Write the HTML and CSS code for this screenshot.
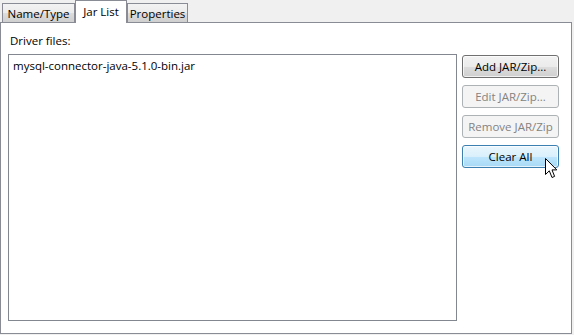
FILE: index.html
```html
<!DOCTYPE html>
<html>
<head>
<meta charset="utf-8">
<link rel="stylesheet" href="styles.css">
</head>
<body>
<div class="dialog">
  <div class="tabs">
    <div class="tab tab-name">Name/Type</div>
    <div class="tab tab-selected">Jar List</div>
    <div class="tab tab-props">Properties</div>
  </div>
  <div class="panel">
    <div class="label">Driver files:</div>
    <div class="body">
      <div class="list">
        <div class="item">mysql-connector-java-5.1.0-bin.jar</div>
      </div>
      <div class="buttons">
        <div class="btn">Add JAR/Zip...</div>
        <div class="btn btn-disabled">Edit JAR/Zip...</div>
        <div class="btn btn-disabled">Remove JAR/Zip</div>
        <div class="btn btn-hover">Clear All</div>
      </div>
    </div>
  </div>
  <svg class="cursor" width="14" height="22" viewBox="0 0 14 22">
    <path d="M0.5 0.5 L0.5 16.5 L4.3 12.8 L7 19.5 L9.6 18.4 L7 11.9 L11.8 11.9 Z" fill="#fff" stroke="#000" stroke-width="1" stroke-linejoin="miter"/>
  </svg>
</div>
</body>
</html>
```

FILE: styles.css
```css
html, body {
  margin: 0;
  padding: 0;
  background: #f0f0f0;
}
body {
  width: 574px;
  height: 335px;
  overflow: hidden;
  font-family: "Open Sans", "Noto Sans", sans-serif;
  font-size: 11.5px;
  color: #000;
}
.dialog {
  position: relative;
  width: 574px;
  height: 335px;
}
.tabs {
  display: flex;
  align-items: flex-end;
  height: 22px;
  padding-left: 2px;
  position: relative;
  z-index: 2;
}
.tab {
  box-sizing: border-box;
  height: 19px;
  border: 1px solid #898c95;
  border-bottom: none;
  background: linear-gradient(#f3f3f3, #ebebeb 50%, #dddddd 51%, #cfcfcf);
  display: flex;
  align-items: center;
  justify-content: center;
  line-height: 15px;
  padding-top: 1px;
}
.tab-name {
  width: 73px;
}
.tab-selected {
  width: 52px;
  height: 23px;
  background: #fff;
  margin-bottom: -1px;
  padding-bottom: 3px;
}
.tab-props {
  width: 61px;
}
.panel {
  box-sizing: border-box;
  width: 572px;
  height: 312px;
  border: 1px solid #898c95;
  background: #fff;
  padding: 10px 12px 12px 7px;
  display: flex;
  flex-direction: column;
  position: relative;
  z-index: 1;
}
.label {
  height: 15px;
  line-height: 15px;
  padding-left: 2px;
  margin-bottom: 6px;
}
.body {
  display: flex;
  gap: 5px;
  flex: 1;
}
.list {
  box-sizing: border-box;
  width: 449px;
  border: 1px solid #828790;
  background: #fff;
  padding: 3px 4px;
}
.item {
  line-height: 15px;
}
.buttons {
  display: flex;
  flex-direction: column;
  gap: 7px;
  padding-top: 1px;
}
.btn {
  box-sizing: border-box;
  width: 97px;
  height: 23px;
  border: 1px solid #707070;
  border-radius: 3px;
  background: linear-gradient(#f2f2f2, #ebebeb 50%, #dddddd 51%, #cfcfcf);
  display: flex;
  align-items: center;
  justify-content: center;
  line-height: 15px;
  box-shadow: inset 0 0 0 1px rgba(255,255,255,0.7);
}
.btn-disabled {
  border-color: #adb2b5;
  background: #f4f4f4;
  color: #838383;
  box-shadow: none;
}
.btn-hover {
  border-color: #3c7fb1;
  background: linear-gradient(#eaf6fd, #d9f0fc 50%, #bee6fd 51%, #a7d9f5);
}
.cursor {
  position: absolute;
  left: 545px;
  top: 158px;
  z-index: 5;
}
```
